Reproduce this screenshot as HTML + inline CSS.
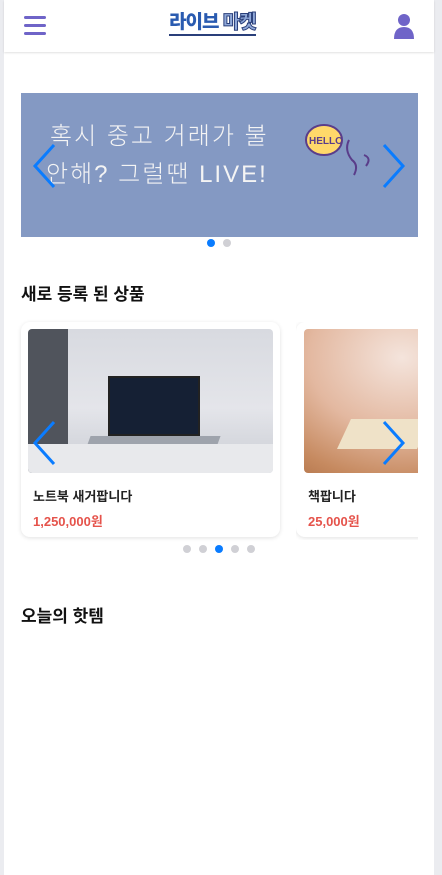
<!DOCTYPE html>
<html><head><meta charset="utf-8"><style>
*{margin:0;padding:0;box-sizing:border-box}
body{width:442px;height:875px;background:#ebecf0;font-family:"Liberation Sans","Noto Sans CJK KR",sans-serif;overflow:hidden;position:relative}
.page{position:absolute;left:4px;top:0;width:430px;height:875px;background:#fff}
.hdr{position:absolute;left:0;top:0;width:430px;height:52px;background:#fff;box-shadow:0 1px 2px rgba(0,0,0,.12)}
.abs{position:absolute}
.dot{position:absolute;width:8px;height:8px;border-radius:50%;background:#d0d0d5}
.dot.on{background:#0a7cff}
h2{position:absolute;font-size:17px;font-weight:bold;color:#111}
.card{position:absolute;top:322px;height:215px;background:#fff;border-radius:9px;box-shadow:0 1px 4px rgba(0,0,0,.12)}
.t{position:absolute;font-size:13px;font-weight:bold;color:#222}
.p{position:absolute;font-size:13px;font-weight:bold;color:#e5534b}
</style></head><body>
<div class="page">
<div class="hdr">
 <div class="abs" style="left:20px;top:16px;width:22px;height:3px;background:#6f64c8;border-radius:2px"></div>
 <div class="abs" style="left:20px;top:24px;width:22px;height:3px;background:#6f64c8;border-radius:2px"></div>
 <div class="abs" style="left:20px;top:32px;width:22px;height:3px;background:#6f64c8;border-radius:2px"></div>
 <div class="abs" style="left:165px;top:12px;font-size:19px;font-weight:900;color:#2a5bb0;letter-spacing:-1px;border-bottom:2px solid #2a3f7a;line-height:22px">라이브 <span style="color:#8fa8d8;-webkit-text-stroke:1px #2a3f7a">마켓</span></div>
 <svg class="abs" style="left:389px;top:13px" width="22" height="26"><circle cx="11" cy="7" r="6" fill="#6f64c8"/><path d="M1 26 Q1 14 11 14 Q21 14 21 26Z" fill="#6f64c8"/></svg>
</div>
<div class="abs" style="left:17px;top:93px;width:397px;height:144px;background:#8499c3"></div>
<div class="abs" style="left:46px;top:118px;color:#f4f4f4;font-size:24px;letter-spacing:2px;line-height:38px;font-weight:300;width:260px;white-space:nowrap">혹시 중고 거래가 불<br><span style="margin-left:-4px">안해? 그럴땐 LIVE!</span></div>
<svg class="abs" style="left:300px;top:120px" width="80" height="70"><ellipse cx="20" cy="20" rx="18" ry="15" fill="#ffd86a" stroke="#5a3d8a" stroke-width="2"/><text x="5" y="24" font-size="10" font-weight="bold" fill="#5a3d8a" font-family="Liberation Sans">HELLO</text><path d="M45 20 Q40 30 48 40 Q55 45 50 55 M60 35 Q68 38 62 46" stroke="#5a3d8a" stroke-width="2" fill="none"/></svg>
<svg class="abs" style="left:28px;top:143px" width="24" height="46"><path d="M22 2 L3 23 L22 44" stroke="#0a7cff" stroke-width="3" fill="none"/></svg>
<svg class="abs" style="left:378px;top:143px" width="24" height="46"><path d="M2 2 L21 23 L2 44" stroke="#0a7cff" stroke-width="3" fill="none"/></svg>
<div class="dot on" style="left:203px;top:239px"></div><div class="dot" style="left:219px;top:239px"></div>
<h2 style="left:17px;top:280px">새로 등록 된 상품</h2>
<div class="card" style="left:17px;width:259px">
 <div class="abs" style="left:7px;top:7px;width:245px;height:144px;border-radius:4px;overflow:hidden;background:linear-gradient(180deg,#d8dae0 0%,#e4e5ea 55%,#c9ccd3 100%)">
  <div class="abs" style="left:0;top:0;width:40px;height:144px;background:#50545c"></div>
  <div class="abs" style="left:80px;top:47px;width:92px;height:60px;background:#152034;border:2px solid #222"></div>
  <div class="abs" style="left:60px;top:107px;width:130px;height:14px;background:#9ea3ac;transform:skewX(-20deg)"></div>
  <div class="abs" style="left:0;top:115px;width:245px;height:29px;background:#e8e9ec"></div>
 </div>
 <div class="t" style="left:12px;top:164px">노트북 새거팝니다</div>
 <div class="p" style="left:12px;top:189px">1,250,000원</div>
</div>
<div class="abs" style="left:292px;top:322px;width:122px;height:218px;overflow:hidden">
 <div class="card" style="left:0;top:0;width:259px">
  <div class="abs" style="left:8px;top:7px;width:245px;height:144px;border-radius:4px;background:radial-gradient(ellipse at 40% 20%,#f4e4dc 0%,#e3b8a0 45%,#c68a60 75%,#a8683e 100%)">
   <div class="abs" style="left:40px;top:90px;width:80px;height:30px;background:#efe2c8;transform:skewX(-25deg)"></div>
  </div>
  <div class="t" style="left:12px;top:164px">책팝니다</div>
  <div class="p" style="left:12px;top:189px">25,000원</div>
 </div>
</div>
<svg class="abs" style="left:28px;top:420px" width="24" height="46"><path d="M22 2 L3 23 L22 44" stroke="#0a7cff" stroke-width="3" fill="none"/></svg>
<svg class="abs" style="left:378px;top:420px" width="24" height="46"><path d="M2 2 L21 23 L2 44" stroke="#0a7cff" stroke-width="3" fill="none"/></svg>
<div class="dot" style="left:179px;top:545px"></div><div class="dot" style="left:195px;top:545px"></div><div class="dot on" style="left:211px;top:545px"></div><div class="dot" style="left:227px;top:545px"></div><div class="dot" style="left:243px;top:545px"></div>
<h2 style="left:17px;top:602px">오늘의 핫템</h2>
</div>
</body></html>
